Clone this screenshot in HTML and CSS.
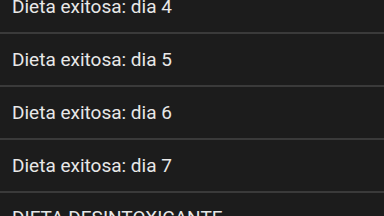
FILE: index.html
```html
<!DOCTYPE html>
<html lang="es">
<head>
  <meta charset="UTF-8" />
  <meta name="viewport" content="width=device-width, initial-scale=1.0"/>
  <title>Dietas</title>
  <link rel="stylesheet" href="styles.css">
</head>
<body>

  <div class="lista">
    <div class="item">Dieta exitosa: dia 4</div>
    <div class="item">Dieta exitosa: dia 5</div>
    <div class="item">Dieta exitosa: dia 6</div>
    <div class="item">Dieta exitosa: dia 7</div>
    <div class="seccion">DIETA DESINTOXICANTE</div>
  </div>

</body>
</html>
```

FILE: styles.css
```css
body {
  font-family: Roboto, 'Noto Sans', sans-serif;
  background: #1c1c1c;
  margin: 0;
  overflow: hidden;
}

.lista {
  margin-top: -19px;
}

.item {
  height: 51px;
  display: flex;
  align-items: center;
  padding-left: 12px;
  font-size: 19px;
  color: #e8e8e8;
  border-bottom: 2px solid #3a3a3a;
}

.seccion {
  padding: 13px 12px;
  font-size: 19px;
  color: #e8e8e8;
}
```
